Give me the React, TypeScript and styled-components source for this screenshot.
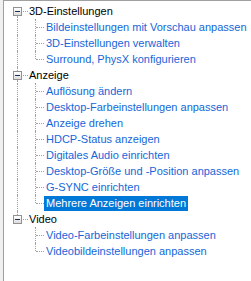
import React from 'react';
import styled, { createGlobalStyle, css } from 'styled-components';

const GlobalStyle = createGlobalStyle`
  html, body {
    margin: 0;
    padding: 0;
    background: #f0f0f0;
  }
  body {
    font-family: "Liberation Sans", Arial, sans-serif;
    font-size: 11px;
  }
`;

const Panel = styled.div`
  margin-left: 3px;
  height: 281px;
  box-sizing: border-box;
  background: #fff;
  border-top: 1px solid #a0a0a0;
  border-left: 1px solid #a0a0a0;
  padding-top: 2px;
  overflow: hidden;
`;

const Row = styled.div`
  display: flex;
  align-items: center;
  height: 16px;
  white-space: nowrap;
`;

const dotted = '1px dotted #a0a0a0';

// a vertical guide column, with the line at $x inside it
const Guide = styled.span<{ $w: number; $x: number; $on?: boolean }>`
  flex: none;
  position: relative;
  width: ${(p) => p.$w}px;
  height: 16px;
  ${(p) =>
    p.$on &&
    css`
      &::before {
        content: '';
        position: absolute;
        left: ${p.$x}px;
        top: 0;
        height: 16px;
        border-left: ${dotted};
      }
    `}
`;

// vertical line half or full, plus horizontal stub to the right
const Elbow = styled.span<{ $w: number; $last?: boolean }>`
  flex: none;
  position: relative;
  width: ${(p) => p.$w}px;
  height: 16px;
  &::before {
    content: '';
    position: absolute;
    left: 0;
    top: 0;
    height: ${(p) => (p.$last ? 8 : 16)}px;
    border-left: ${dotted};
  }
  &::after {
    content: '';
    position: absolute;
    left: 1px;
    right: 0;
    top: 8px;
    border-top: ${dotted};
  }
`;

const ExpanderCell = styled.span<{ $up: boolean; $down: boolean }>`
  flex: none;
  position: relative;
  width: 23px;
  height: 16px;
  display: flex;
  align-items: center;
  padding-left: 9px;
  box-sizing: border-box;
  ${(p) =>
    p.$up &&
    css`
      &::before {
        content: '';
        position: absolute;
        left: 13px;
        top: 0;
        height: 4px;
        border-left: ${dotted};
      }
    `}
  ${(p) =>
    p.$down &&
    css`
      &::after {
        content: '';
        position: absolute;
        left: 13px;
        top: 13px;
        height: 4px;
        border-left: ${dotted};
      }
    `}
`;

const Box = styled.span`
  flex: none;
  position: relative;
  width: 9px;
  height: 9px;
  box-sizing: border-box;
  border: 1px solid #919191;
  background: linear-gradient(#ffffff, #dcdcdc);
  &::after {
    content: '';
    position: absolute;
    left: 1px;
    top: 3px;
    width: 5px;
    height: 1px;
    background: #1c2e4f;
  }
`;

const Stub = styled.span`
  flex: none;
  width: 5px;
  margin-left: 1px;
  border-top: ${dotted};
  align-self: center;
  margin-top: 1px;
`;

const Label = styled.span<{ $kind: 'group' | 'link'; $selected?: boolean }>`
  display: inline-block;
  line-height: 15px;
  padding: 0 2px;
  color: ${(p) => (p.$selected ? '#fff' : p.$kind === 'group' ? '#000' : '#1566d9')};
  background: ${(p) => (p.$selected ? '#0078d7' : 'transparent')};
`;

type Group = { title: string; items: string[] };

const tree: Group[] = [
  {
    title: '3D-Einstellungen',
    items: [
      'Bildeinstellungen mit Vorschau anpassen',
      '3D-Einstellungen verwalten',
      'Surround, PhysX konfigurieren',
    ],
  },
  {
    title: 'Anzeige',
    items: [
      'Auflösung ändern',
      'Desktop-Farbeinstellungen anpassen',
      'Anzeige drehen',
      'HDCP-Status anzeigen',
      'Digitales Audio einrichten',
      'Desktop-Größe und -Position anpassen',
      'G-SYNC einrichten',
      'Mehrere Anzeigen einrichten',
    ],
  },
  {
    title: 'Video',
    items: ['Video-Farbeinstellungen anpassen', 'Videobildeinstellungen anpassen'],
  },
];

const selected = 'Mehrere Anzeigen einrichten';

export default function App() {
  return (
    <>
      <GlobalStyle />
      <Panel>
        {tree.map((g, gi) => {
          const lastGroup = gi === tree.length - 1;
          return (
            <React.Fragment key={g.title}>
              <Row>
                <ExpanderCell $up={gi > 0} $down={!lastGroup}>
                  <Box />
                  <Stub />
                </ExpanderCell>
                <Label $kind="group">{g.title}</Label>
              </Row>
              {g.items.map((it, ii) => (
                <Row key={it}>
                  <Guide $w={31} $x={13} $on={!lastGroup} />
                  <Elbow $w={9} $last={ii === g.items.length - 1} />
                  <Label $kind="link" $selected={it === selected}>
                    {it}
                  </Label>
                </Row>
              ))}
            </React.Fragment>
          );
        })}
      </Panel>
    </>
  );
}
